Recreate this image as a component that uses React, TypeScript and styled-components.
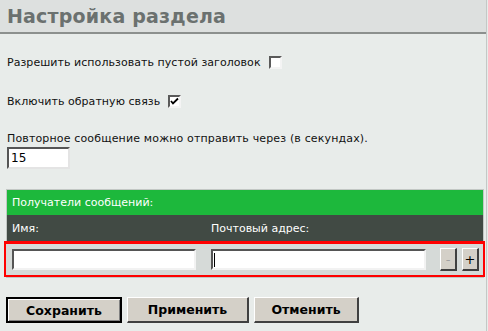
import styled, { createGlobalStyle } from 'styled-components';

const GlobalStyle = createGlobalStyle`
  html, body {
    margin: 0;
    padding: 0;
    background: #e8ecea;
  }
  body {
    font-family: "DejaVu Sans", Tahoma, sans-serif;
    font-size: 11px;
    color: #111;
  }
`;

const Page = styled.div`
  width: 486px;
  min-height: 331px;
  border-right: 1px solid #c4c8c6;
  background: #e8ecea;
`;

const Header = styled.div`
  height: 32px;
  background: #dde0df;
  border-bottom: 2px solid #8c908e;
  display: flex;
  align-items: center;
  padding-left: 7px;
`;

const Title = styled.h1`
  margin: 0;
  font-family: "DejaVu Sans", Tahoma, sans-serif;
  font-size: 19px;
  font-weight: bold;
  color: #6b716f;
  letter-spacing: 0.2px;
`;

const Content = styled.div`
  display: flex;
  flex-direction: column;
  padding: 0 7px;
`;

const OptionRow = styled.label<{ $top: number }>`
  display: flex;
  align-items: center;
  gap: 8px;
  height: 14px;
  margin-top: ${(p) => p.$top}px;
  letter-spacing: 0.05px;
`;

const Check = styled.span<{ $checked?: boolean }>`
  width: 9px;
  height: 9px;
  background: #fff;
  border-top: 2px solid #5a5a5a;
  border-left: 2px solid #5a5a5a;
  border-bottom: 2px solid #f4f4f4;
  border-right: 2px solid #f4f4f4;
  display: flex;
  align-items: center;
  justify-content: center;
`;

const Label = styled.div`
  margin-top: 24px;
  line-height: 14px;
  letter-spacing: 0.15px;
`;

const SmallInput = styled.input`
  box-sizing: border-box;
  width: 63px;
  height: 22px;
  margin-top: 1px;
  padding: 0 2px;
  font-family: "DejaVu Sans", Tahoma, sans-serif;
  font-size: 12px;
  color: #000;
  background: #fff;
  border-top: 2px solid #555;
  border-left: 2px solid #555;
  border-bottom: 2px solid #e4e4e4;
  border-right: 2px solid #e4e4e4;
  outline: none;
`;

const Table = styled.div`
  margin: 20px -5px 0 -1px;
  border: 1px solid #c2c7c4;
  display: flex;
  flex-direction: column;
`;

const Caption = styled.div`
  height: 25px;
  background: #1db83c;
  color: #fff;
  display: flex;
  align-items: center;
  padding-left: 5px;
`;

const HeadRow = styled.div`
  height: 26px;
  background: #414a44;
  color: #fff;
  display: grid;
  grid-template-columns: 199px 1fr;
  align-items: center;
  padding-left: 5px;
`;

const DataRow = styled.div`
  margin: 0 -2px 0 -3px;
  height: 31px;
  border: 2px solid #f00;
  border-top-width: 3px;
  background: #d6dad8;
  display: flex;
  align-items: center;
  padding: 0 0 0 6px;
`;

const CellInput = styled.input<{ $w: number; $gap: number; $caret?: boolean }>`
  box-sizing: border-box;
  flex-shrink: 0;
  width: ${(p) => p.$w}px;
  height: 21px;
  margin-right: ${(p) => p.$gap}px;
  padding: 0 3px;
  font-size: 12px;
  border-top: 2px solid #555;
  border-left: 2px solid #555;
  border-bottom: 2px solid #f2f2f2;
  border-right: 2px solid #f2f2f2;
  outline: none;
  background: ${(p) =>
    p.$caret
      ? 'linear-gradient(#000, #000) no-repeat 1px 2px / 1px 14px, #fff'
      : '#fff'};
`;

const RowButton = styled.button<{ $muted?: boolean }>`
  box-sizing: border-box;
  flex-shrink: 0;
  width: 17px;
  height: 23px;
  margin-right: 5px;
  padding: 0;
  background: #d4d0c8;
  border-top: 1px solid #fff;
  border-left: 1px solid #fff;
  border-bottom: 2px solid #404040;
  border-right: 2px solid #404040;
  font-family: "DejaVu Sans", Tahoma, sans-serif;
  font-size: 13px;
  color: ${(p) => (p.$muted ? '#a0a0a0' : '#000')};
  display: flex;
  align-items: center;
  justify-content: center;
`;

const Actions = styled.div`
  display: flex;
  gap: 5px;
  margin: 19px 0 0 -1px;
`;

const ActionButton = styled.button<{ $w: number; $primary?: boolean }>`
  box-sizing: border-box;
  width: ${(p) => p.$w}px;
  height: 26px;
  padding: 0;
  background: #d4d0c8;
  font-family: "DejaVu Sans", Tahoma, sans-serif;
  font-size: 12.5px;
  font-weight: bold;
  color: #000;
  border-top: 1px solid #fff;
  border-left: 1px solid #fff;
  border-bottom: 2px solid #404040;
  border-right: 2px solid #404040;
  ${(p) =>
    p.$primary &&
    `
    border: 2px solid #000;
    box-shadow: inset 1px 1px 0 #fff, inset -1px -1px 0 #808080;
  `}
`;

export default function App() {
  return (
    <Page>
      <GlobalStyle />
      <Header>
        <Title>Настройка раздела</Title>
      </Header>
      <Content>
        <OptionRow $top={21}>
          Разрешить использовать пустой заголовок
          <Check />
        </OptionRow>
        <OptionRow $top={25}>
          Включить обратную связь
          <Check $checked>
            <svg width="9" height="9" viewBox="0 0 9 9">
              <path d="M1 4 L3 6.5 L8 1.5" fill="none" stroke="#000" strokeWidth="1.8" />
            </svg>
          </Check>
        </OptionRow>
        <Label>Повторное сообщение можно отправить через (в секундах).</Label>
        <SmallInput defaultValue="15" />
        <Table>
          <Caption>Получатели сообщений:</Caption>
          <HeadRow>
            <span>Имя:</span>
            <span>Почтовый адрес:</span>
          </HeadRow>
          <DataRow>
            <CellInput $w={184} $gap={15} />
            <CellInput $w={215} $gap={14} $caret />
            <RowButton $muted>-</RowButton>
            <RowButton>+</RowButton>
          </DataRow>
        </Table>
        <Actions>
          <ActionButton $w={116} $primary>Сохранить</ActionButton>
          <ActionButton $w={122}>Применить</ActionButton>
          <ActionButton $w={105}>Отменить</ActionButton>
        </Actions>
      </Content>
    </Page>
  );
}
